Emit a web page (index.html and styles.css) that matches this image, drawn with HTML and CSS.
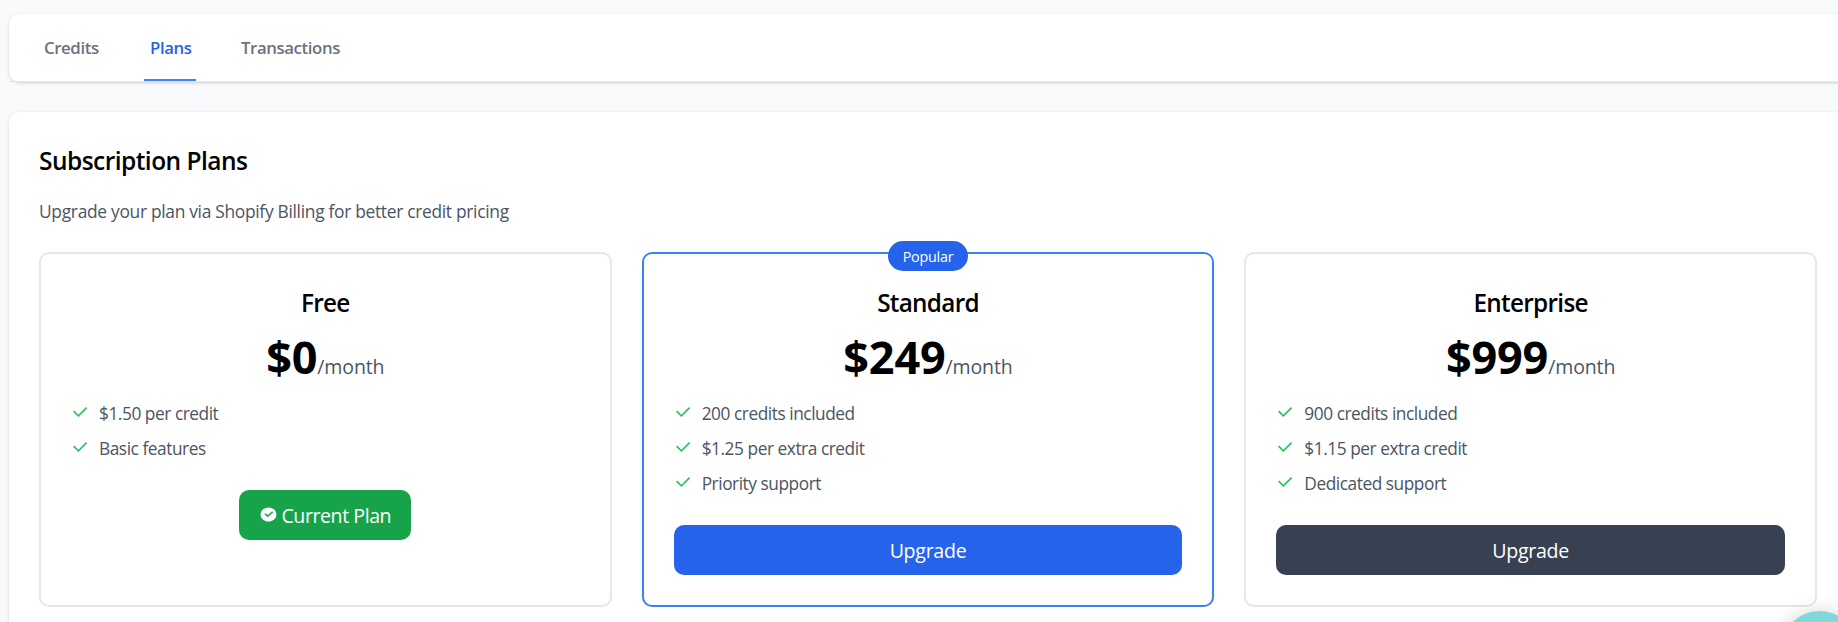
FILE: index.html
```html
<!DOCTYPE html>
<html lang="en">
<head>
<meta charset="utf-8">
<title>Subscription Plans</title>
<link rel="stylesheet" href="styles.css">
</head>
<body>
<svg class="sprite" aria-hidden="true">
  <symbol id="check" viewBox="0 0 24 24"><path d="M10 15.172L19.192 5.979l1.415 1.414L10 18l-6.364-6.364 1.414-1.414z"/></symbol>
  <symbol id="check-circle" viewBox="0 0 24 24" preserveAspectRatio="none"><path d="M12 22C6.477 22 2 17.523 2 12S6.477 2 12 2s10 4.477 10 10-4.477 10-10 10zm-.997-6l7.07-7.071-1.414-1.414-5.656 5.657-2.829-2.829-1.414 1.414L11.003 16z"/></symbol>
</svg>
<nav class="tabs-card">
  <div class="tabs">
    <a class="tab tab-credits">Credits</a>
    <a class="tab tab-plans active">Plans</a>
    <a class="tab tab-transactions">Transactions</a>
  </div>
</nav>
<main class="panel">
  <h1 class="title">Subscription Plans</h1>
  <p class="subtitle">Upgrade your plan via Shopify Billing for better credit pricing</p>
  <div class="plans">
    <section class="plan">
      <h2 class="plan-name">Free</h2>
      <p class="price"><span class="amount">$0</span><span class="period">/month</span></p>
      <ul class="features">
        <li><svg class="icon"><use href="#check"/></svg><span>$1.50 per credit</span></li>
        <li><svg class="icon"><use href="#check"/></svg><span>Basic features</span></li>
      </ul>
      <button class="btn current"><svg class="icon"><use href="#check-circle"/></svg><span>Current Plan</span></button>
    </section>
    <section class="plan popular">
      <span class="badge">Popular</span>
      <h2 class="plan-name">Standard</h2>
      <p class="price"><span class="amount">$249</span><span class="period">/month</span></p>
      <ul class="features">
        <li><svg class="icon"><use href="#check"/></svg><span>200 credits included</span></li>
        <li><svg class="icon"><use href="#check"/></svg><span>$1.25 per extra credit</span></li>
        <li><svg class="icon"><use href="#check"/></svg><span>Priority support</span></li>
      </ul>
      <button class="btn primary">Upgrade</button>
    </section>
    <section class="plan">
      <h2 class="plan-name">Enterprise</h2>
      <p class="price"><span class="amount">$999</span><span class="period">/month</span></p>
      <ul class="features">
        <li><svg class="icon"><use href="#check"/></svg><span>900 credits included</span></li>
        <li><svg class="icon"><use href="#check"/></svg><span>$1.15 per extra credit</span></li>
        <li><svg class="icon"><use href="#check"/></svg><span>Dedicated support</span></li>
      </ul>
      <button class="btn dark">Upgrade</button>
    </section>
  </div>
</main>
<div class="chat-corner"><div class="chat-bubble"></div></div>
</body>
</html>
```
FILE: styles.css
```css
* { box-sizing: border-box; margin: 0; padding: 0; }
html { height: 622px; overflow: hidden; }
body {
  height: 622px;
  overflow: hidden;
  padding: 14px 0 0 9px;
  background: #f9fafb;
  color: #000;
  font-family: "Open Sans", "Noto Sans", sans-serif;
  font-size: 17.3px;
}
.sprite { display: none; }
.tabs-card, .panel {
  width: 1838px;
  background: #fff;
  border-radius: 10px;
  box-shadow: 0 1px 4px rgba(0, 0, 0, .1), 0 1px 2px rgba(0, 0, 0, .08);
}
.tabs-card { height: 68px; margin-bottom: 30px; }
.tabs { display: flex; gap: 40px; height: 68px; padding-left: 29px; border-bottom: 1px solid #e5e7eb; }
.tab {
  height: 67px;
  padding: 0 6px;
  border-bottom: 2px solid transparent;
  color: #6b7280;
  font-weight: 600;
  font-size: 16.8px;
  line-height: 67px;
  letter-spacing: -.4px;
  white-space: nowrap;
}
.tab-credits { width: 67px; }
.tab-plans { width: 52px; margin-left: -1px; }
.tab-transactions { width: 110px; margin-left: -1px; }
.tab.active { color: #2563eb; border-bottom-color: #3b82f6; }
.panel { height: 510px; padding: 30px 30px 0; border-radius: 10px 10px 0 0; }
.title { height: 38px; font-size: 24.5px; font-weight: 600; line-height: 38px; letter-spacing: -.54px; white-space: nowrap; }
.subtitle { height: 25px; margin: 18px 0 29px; color: #4b5563; font-size: 17.4px; line-height: 26px; letter-spacing: -.31px; white-space: nowrap; }
.plans { display: grid; grid-template-columns: repeat(3, 1fr); gap: 30px; }
.plan {
  position: relative;
  display: flex;
  flex-direction: column;
  height: 355px;
  padding: 30px;
  border: 2px solid #e5e7eb;
  border-radius: 10px;
}
.plan.popular { border-color: #3b82f6; }
.badge {
  position: absolute;
  top: -13px;
  left: 50%;
  width: 80px;
  height: 30px;
  transform: translateX(-50%);
  border-radius: 15px;
  background: #2563eb;
  color: #fff;
  font-size: 14.3px;
  letter-spacing: -.2px;
  line-height: 31px;
  text-align: center;
}
.plan-name { height: 36px; font-size: 24.3px; font-weight: 600; line-height: 37px; letter-spacing: -.7px; text-align: center; }
.price { height: 50px; margin-top: 12px; line-height: 50px; text-align: center; white-space: nowrap; }
.amount { font-size: 45px; font-weight: 700; letter-spacing: -.2px; }
.period { color: #4b5563; font-size: 19.5px; letter-spacing: -.1px; }
.features { display: flex; flex-direction: column; gap: 10px; margin-top: 18px; color: #4b5563; list-style: none; }
.features li { display: flex; align-items: center; gap: 8px; height: 25px; line-height: 25px; letter-spacing: -.45px; white-space: nowrap; }
.icon { flex: none; width: 20px; height: 20px; fill: currentColor; }
.features .icon { margin: -1px 0 0 -1px; color: #22c55e; }
.features span { padding: 2px 0 0 1px; }
.btn {
  display: flex;
  align-items: center;
  justify-content: center;
  height: 50px;
  padding-top: 2px;
  margin-top: 30px;
  border: 0;
  border-radius: 10px;
  color: #fff;
  font: 19.6px/48px "Open Sans", "Noto Sans", sans-serif;
  letter-spacing: -.3px;
  white-space: nowrap;
}
.current { align-self: center; width: 172px; gap: 3px; background: #16a34a; letter-spacing: -.45px; }
.current .icon { width: 19px; height: 17px; margin-top: -3px; }
.primary { background: #2563eb; }
.dark { background: #374151; }
.chat-corner {
  position: absolute;
  top: 560px;
  left: 1738px;
  width: 100px;
  height: 62px;
  overflow: hidden;
}
.chat-bubble {
  width: 75px;
  height: 75px;
  margin: 51px 0 0 44px;
  border-radius: 50%;
  background: #80d8d8;
  box-shadow: 0 2px 20px rgba(0, 0, 0, .2);
}
```
